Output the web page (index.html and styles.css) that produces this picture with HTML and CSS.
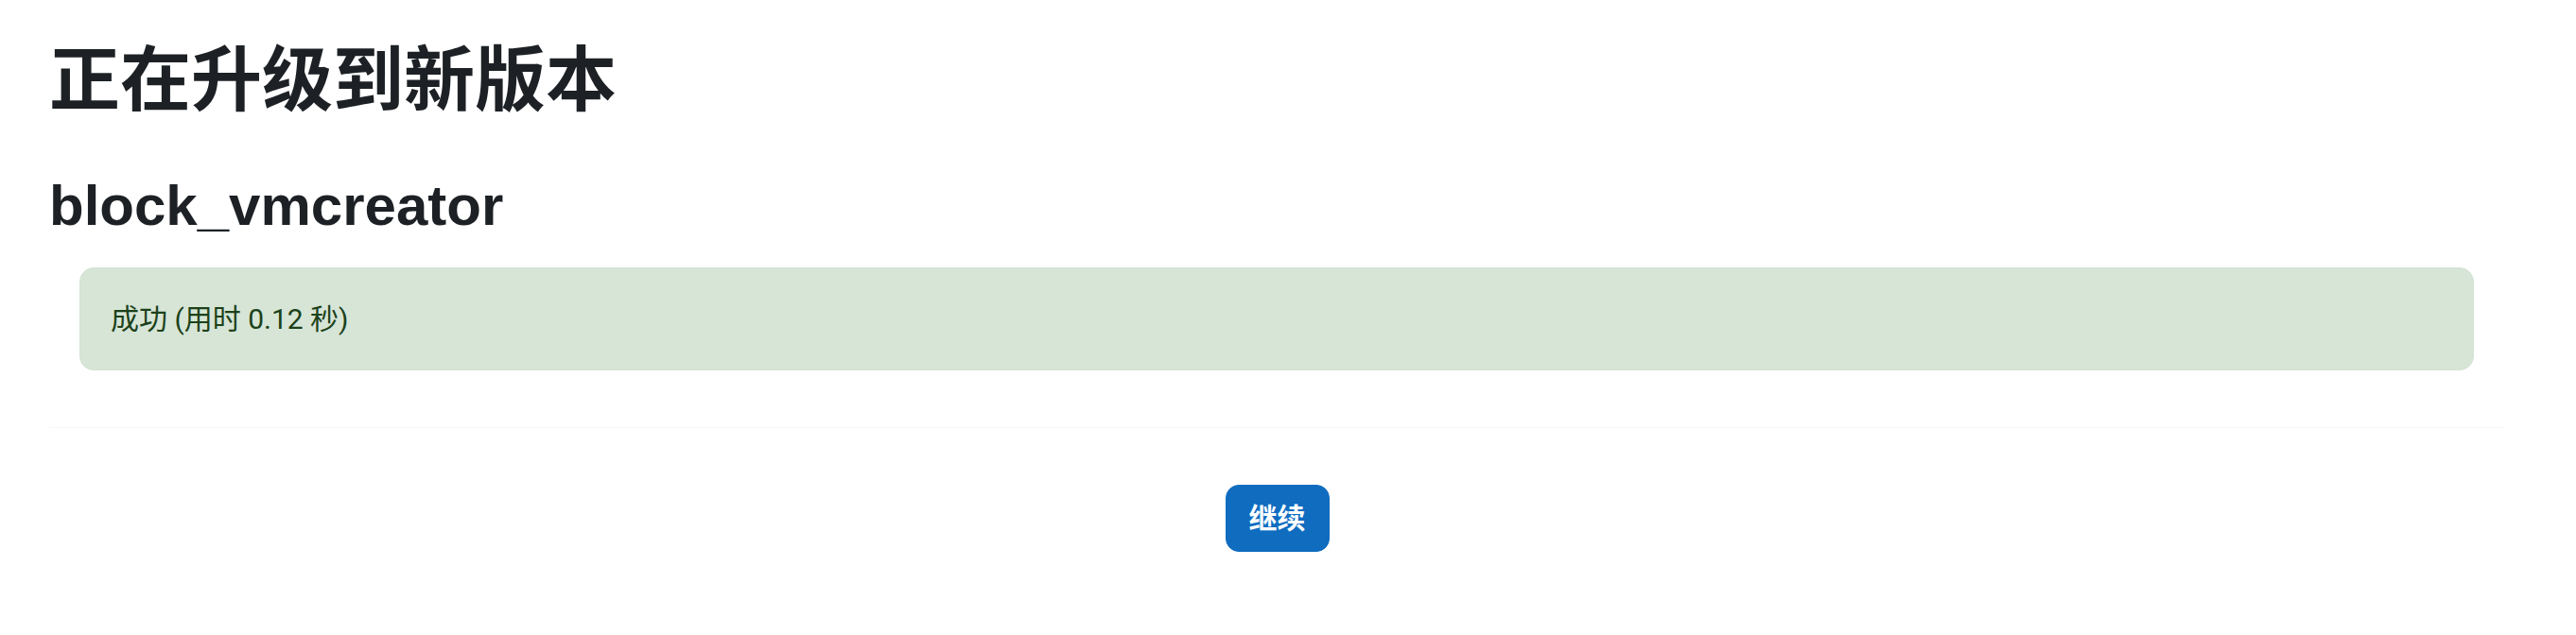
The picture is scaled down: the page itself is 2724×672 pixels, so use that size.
FILE: index.html
```html
<!DOCTYPE html>
<html lang="zh-CN">
<head>
<meta charset="utf-8">
<title>正在升级到新版本</title>
<link rel="stylesheet" href="styles.css">
</head>
<body>
<div class="page">
  <h2 class="page-title">正在升级到新版本</h2>
  <section class="plugin">
    <h3 class="plugin-name">block_vmcreator</h3>
    <div class="alert alert-success">成功 (用时 0.12 秒)</div>
  </section>
  <div class="actions">
    <button class="btn-primary" type="button">继续</button>
  </div>
</div>
</body>
</html>
```
FILE: styles.css
```css
html, body {
  margin: 0;
  padding: 0;
  background: #ffffff;
}
body {
  font-family: Roboto, "Noto Sans CJK SC", sans-serif;
  color: #1d2125;
  font-size: 30px;
  line-height: 1.5;
}
.page {
  padding: 0 75px 0 52px;
}
.page-title {
  font-family: "Liberation Sans", "Noto Sans CJK SC", sans-serif;
  font-size: 75px;
  font-weight: 700;
  line-height: 1.2;
  margin: 0;
  padding-top: 40px;
}
.plugin {
  border-bottom: 1px solid #f7f7f7;
  padding-bottom: 60px;
}
.plugin-name {
  font-family: "Liberation Sans", "Noto Sans CJK SC", sans-serif;
  font-size: 60px;
  font-weight: 700;
  line-height: 1.2;
  margin: 52px 0 0 0;
}
.alert {
  margin: 29px 33px 0 32px;
  padding: 31px 32px;
  border: 1px solid #d3e3d3;
  border-radius: 15px;
  background: #d6e5d6;
  color: #1c411a;
  font-family: Roboto, "Noto Sans CJK SC", sans-serif;
}
.actions {
  display: flex;
  justify-content: center;
  padding-top: 60px;
}
.btn-primary {
  font-family: Roboto, "Noto Sans CJK SC", sans-serif;
  font-size: 30px;
  font-weight: 700;
  line-height: 1.5;
  color: #ffffff;
  background: #0f6cbf;
  border: 1px solid #0f6cbf;
  border-radius: 14px;
  padding: 12px 24px;
}
```
